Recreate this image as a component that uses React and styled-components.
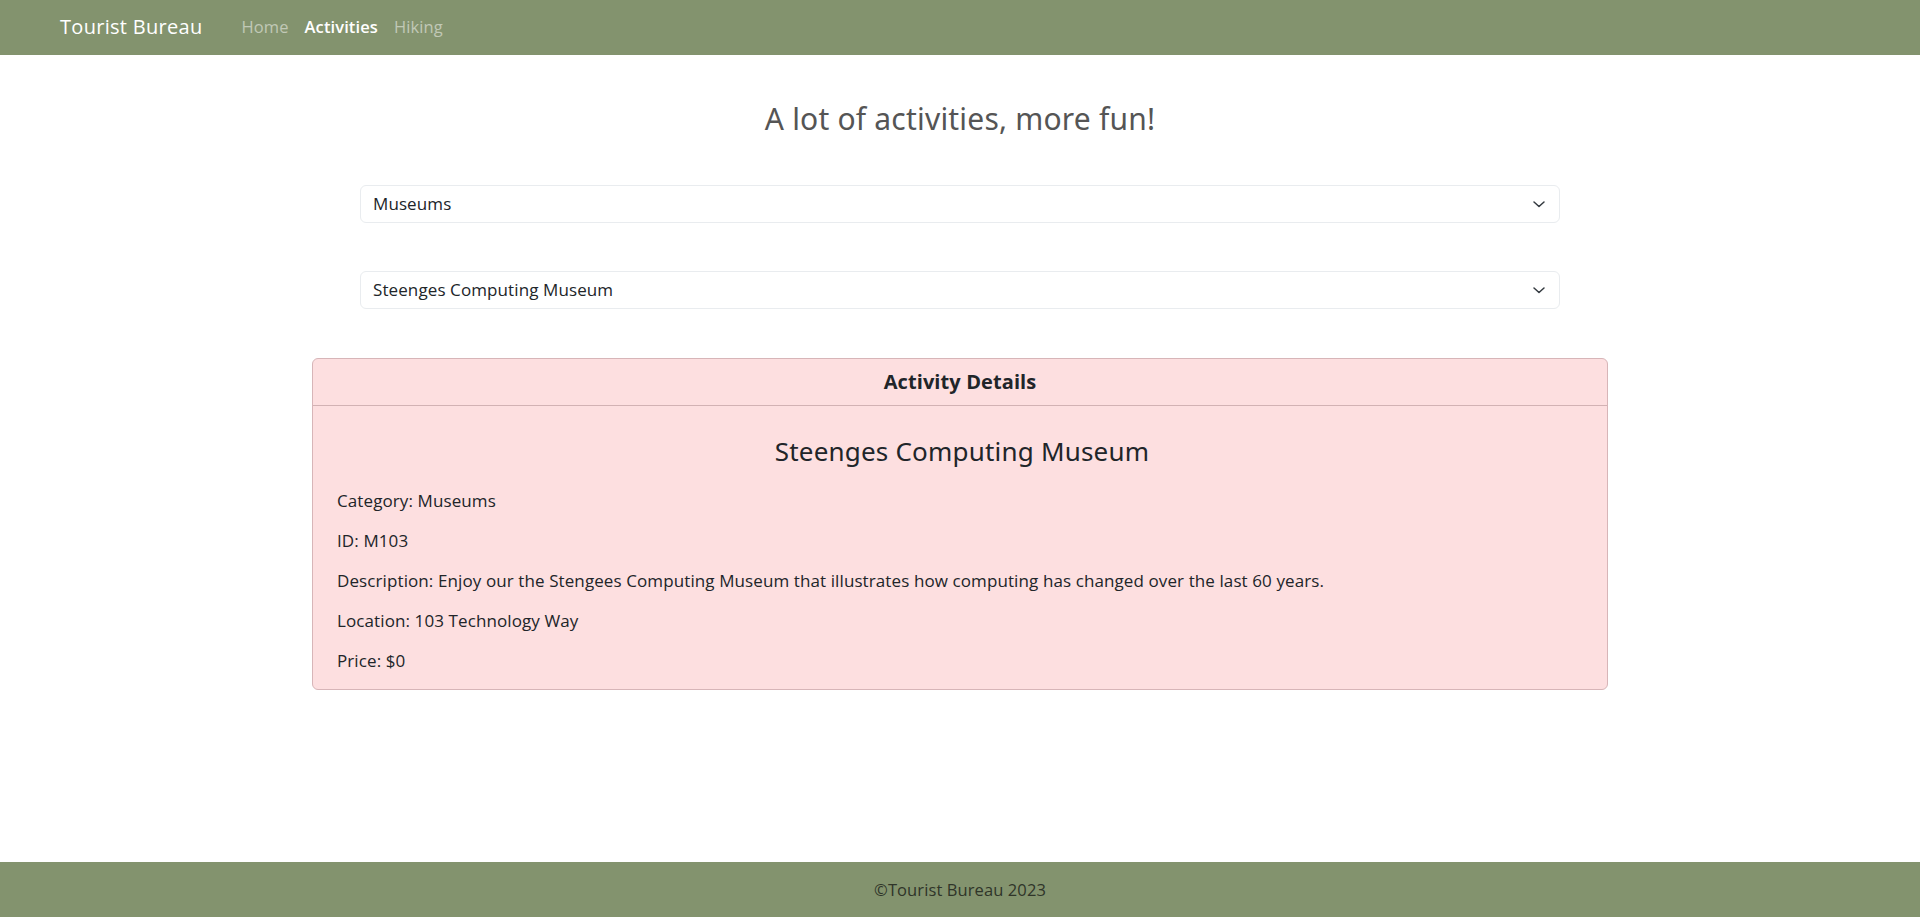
import React from "react";
import styled, { createGlobalStyle } from "styled-components";

const GlobalStyle = createGlobalStyle`
  * { box-sizing: border-box; }
  html, body { margin: 0; padding: 0; }
  body {
    font-family: "Open Sans", "Noto Sans", sans-serif;
    font-size: 17px;
    line-height: 24px;
    letter-spacing: 0.1px;
    color: #212529;
    background: #fff;
  }
`;

const activity = {
  name: "Steenges Computing Museum",
  category: "Museums",
  id: "M103",
  description:
    "Enjoy our the Stengees Computing Museum that illustrates how computing has changed over the last 60 years.",
  location: "103 Technology Way",
  price: 0,
};

const Chevron = () => (
  <svg width="16" height="16" viewBox="0 0 16 16" fill="none">
    <path
      d="m3 6 5 4.5 5-4.5"
      stroke="#343a40"
      strokeWidth="1.5"
      strokeLinecap="round"
      strokeLinejoin="round"
    />
  </svg>
);

const App = () => {
  return (
    <Page>
      <GlobalStyle />
      <Navbar>
        <Brand>Tourist Bureau</Brand>
        <NavLinks>
          <NavLink>Home</NavLink>
          <NavLink active>Activities</NavLink>
          <NavLink>Hiking</NavLink>
        </NavLinks>
      </Navbar>

      <Main>
        <Heading>A lot of activities, more fun!</Heading>
        <Select>
          <span>Museums</span>
          <Chevron />
        </Select>
        <Select>
          <span>{activity.name}</span>
          <Chevron />
        </Select>

        <Card>
          <CardHeader>Activity Details</CardHeader>
          <CardBody>
            <CardTitle>{activity.name}</CardTitle>
            <Line>Category: {activity.category}</Line>
            <Line>ID: {activity.id}</Line>
            <Line>Description: {activity.description}</Line>
            <Line>Location: {activity.location}</Line>
            <Line>Price: ${activity.price}</Line>
          </CardBody>
        </Card>
      </Main>

      <Footer>©Tourist Bureau 2023</Footer>
    </Page>
  );
};

const Page = styled.div`
  display: flex;
  flex-direction: column;
  min-height: 100vh;
`;

const Navbar = styled.nav`
  display: flex;
  align-items: center;
  height: 55px;
  padding: 0 60px 2px;
  background: #83936e;
`;

const Brand = styled.a`
  font-size: 20px;
  color: #fff;
  margin-right: 39px;
  letter-spacing: 0.3px;
`;

const NavLinks = styled.div`
  display: flex;
  gap: 16px;
`;

const NavLink = styled.a`
  font-size: 16.5px;
  font-weight: ${(p) => (p.active ? 600 : 400)};
  color: ${(p) => (p.active ? "#fff" : "rgba(255, 255, 255, 0.5)")};
`;

const Main = styled.main`
  flex: 1;
  width: 1296px;
  margin: 0 auto;
  display: flex;
  flex-direction: column;
  align-items: center;
  padding-top: 46px;
`;

const Heading = styled.h2`
  margin: 0 0 48px;
  font-family: "Noto Sans", "Open Sans", sans-serif;
  font-weight: 400;
  font-size: 30px;
  line-height: 36px;
  letter-spacing: 0.2px;
  color: #555;
`;

const Select = styled.div`
  width: 1200px;
  height: 38px;
  display: flex;
  align-items: center;
  justify-content: space-between;
  padding: 0 12px;
  margin-bottom: 48px;
  border: 1px solid #e9ecef;
  border-radius: 6px;
  color: #212529;
`;

const Card = styled.section`
  width: 100%;
  margin-top: 1px;
  background: #fddfe0;
  border: 1px solid #d7b5b8;
  border-radius: 6px;
  overflow: hidden;
`;

const CardHeader = styled.div`
  padding: 8px 16px;
  border-bottom: 1px solid #d2b2b4;
  font-size: 20px;
  font-weight: 700;
  line-height: 30px;
  text-align: center;
  color: #212529;
`;

const CardBody = styled.div`
  padding: 16px 20px 16px 24px;
`;

const CardTitle = styled.h4`
  margin: 15px 0 23px;
  font-family: "Noto Sans", "Open Sans", sans-serif;
  font-weight: 400;
  font-size: 26px;
  line-height: 29px;
  letter-spacing: 0.2px;
  text-align: center;
  color: #212529;
`;

const Line = styled.p`
  margin: 0 0 16px;
  &:last-child {
    margin-bottom: 0;
  }
`;

const Footer = styled.footer`
  height: 55px;
  display: flex;
  align-items: center;
  justify-content: center;
  background: #83936e;
  font-size: 16.5px;
  color: #2f3529;
`;

export default App;
